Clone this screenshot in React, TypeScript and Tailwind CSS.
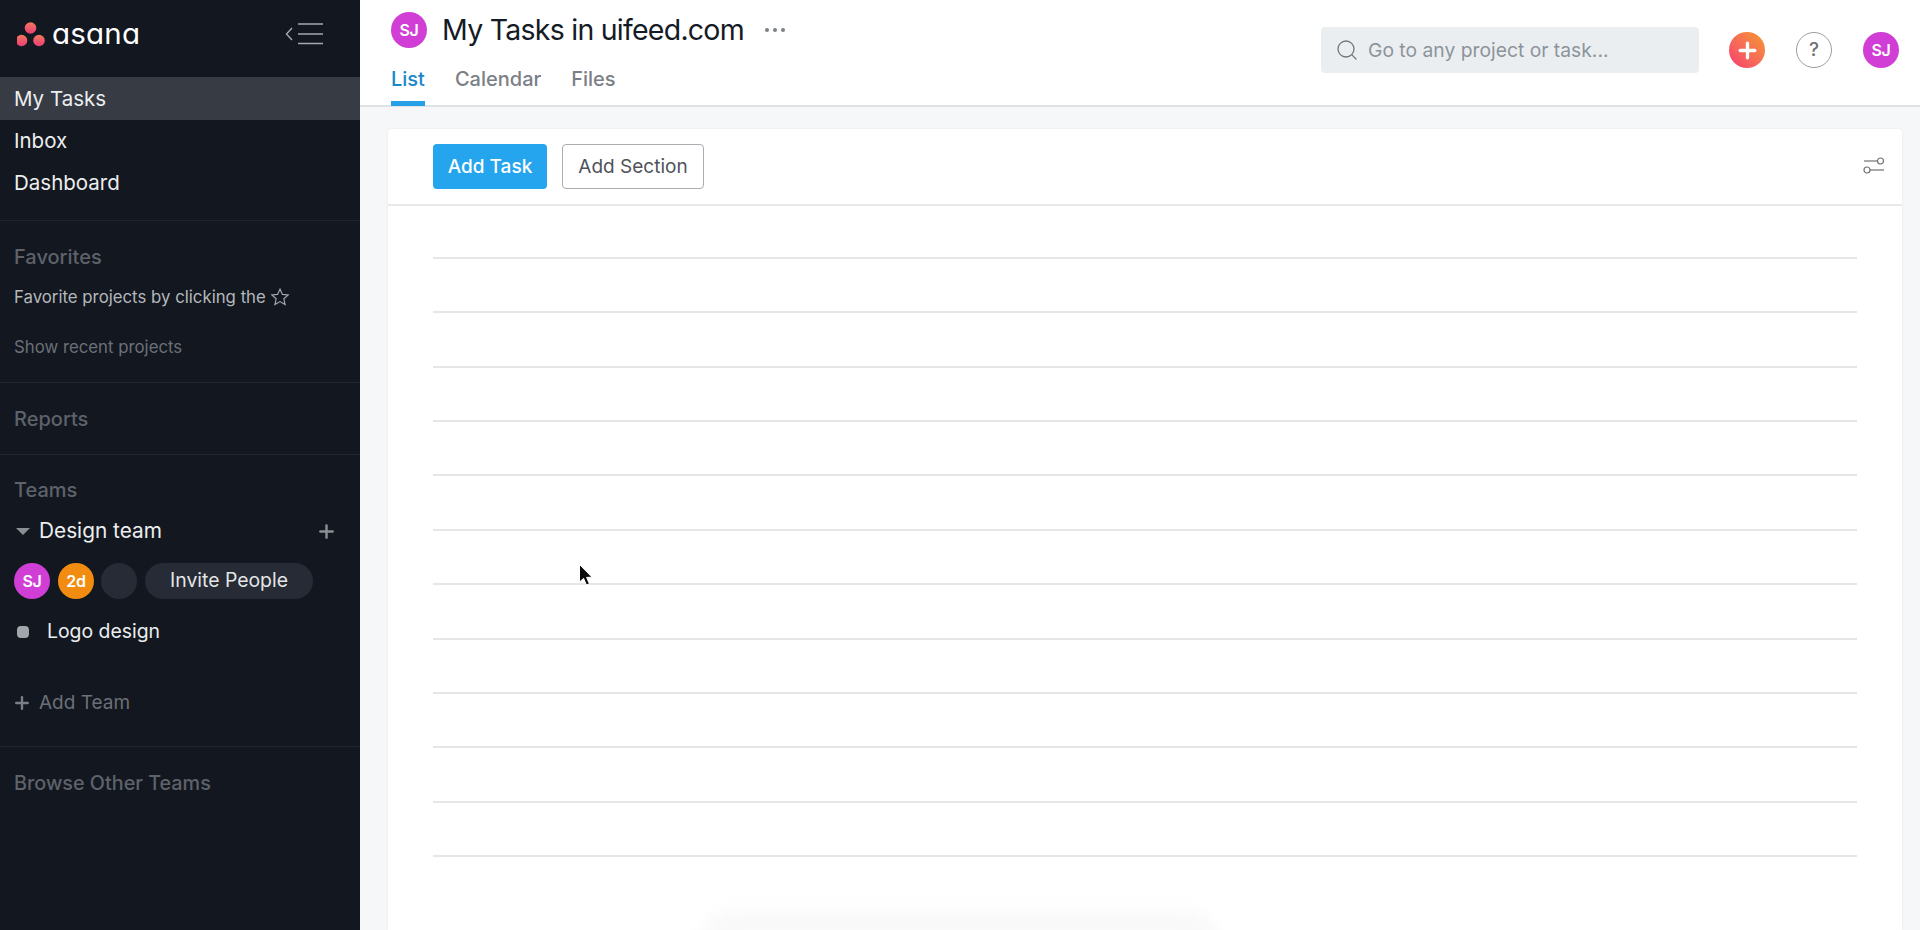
import { Plus, Search } from "lucide-react";

const FONT = "[font-family:Inter,'Liberation_Sans',sans-serif]";

function Avatar({ label, className }: { label: string; className: string }) {
  return (
    <div
      className={`flex h-9 w-9 shrink-0 items-center justify-center rounded-full text-[16px] font-semibold tracking-[-0.3px] text-white ${className}`}
    >
      {label}
    </div>
  );
}

function Divider({ className = "" }: { className?: string }) {
  return <div className={`h-px bg-[#1f242d] ${className}`} />;
}

function AsanaLogo() {
  return (
    <div className="flex items-center">
      <svg width="32" height="28" viewBox="0 0 32 28" className="shrink-0">
        <defs>
          <linearGradient id="asanaDot" x1="0" y1="0" x2="0" y2="1">
            <stop offset="0" stopColor="#f2795c" />
            <stop offset="1" stopColor="#ea3d77" />
          </linearGradient>
        </defs>
        <circle cx="13.5" cy="8" r="5.8" fill="url(#asanaDot)" />
        <circle cx="4.5" cy="20.5" r="5.8" fill="url(#asanaDot)" />
        <circle cx="22" cy="20.5" r="5.8" fill="url(#asanaDot)" />
      </svg>
      <span className="ml-[3px] text-[29.5px] font-normal leading-none tracking-[0.2px] text-white [font-feature-settings:'cv11']">
        asana
      </span>
    </div>
  );
}

function Sidebar() {
  return (
    <aside className="flex h-full w-[360px] shrink-0 flex-col bg-[#13171f] text-[#eceef0]">
      <div className="flex h-[77px] items-start justify-between pl-[17px] pr-[37px] pt-[19px]">
        <AsanaLogo />
        <svg width="38" height="22" viewBox="0 0 38 22" className="mt-[4px]" fill="none" stroke="#a5a8ad" strokeWidth="1.4">
          <path d="M7 5 L1.5 11 L7 17" />
          <path d="M13 1 H38 M13 11 H38 M13 20.5 H38" />
        </svg>
      </div>

      <div className="flex h-[43px] items-center bg-[#373b44] pl-[14px] pt-px text-[20.5px]">My Tasks</div>
      <div className="flex h-[42px] items-center pl-[14px] text-[20.5px]">Inbox</div>
      <div className="flex h-[42px] items-center pl-[14px] text-[20.5px]">Dashboard</div>

      <Divider className="mt-[16px]" />
      <div className="mt-[25px] pl-[14px] text-[20px] font-medium leading-[22px] text-[#5d626b]">Favorites</div>
      <div className="mt-[18px] flex items-center pl-[14px] text-[16.8px] leading-[22px] text-[#b4b7bc]">
        Favorite projects by clicking the
        <svg width="20" height="20" viewBox="0 0 24 24" fill="none" stroke="#a5a8ad" strokeWidth="1.4" className="ml-[4px]">
          <path d="M12 2.5 L14.9 8.9 L21.8 9.6 L16.6 14.2 L18.1 21 L12 17.5 L5.9 21 L7.4 14.2 L2.2 9.6 L9.1 8.9 Z" />
        </svg>
      </div>
      <div className="mt-[28px] pl-[14px] text-[16.8px] leading-[22px] text-[#6b7078]">Show recent projects</div>

      <Divider className="mt-[24px]" />
      <div className="mt-[25px] pl-[14px] text-[20px] font-medium leading-[22px] text-[#5d626b]">Reports</div>
      <Divider className="mt-[24px]" />
      <div className="mt-[24px] pl-[14px] text-[20px] font-medium leading-[22px] text-[#5d626b]">Teams</div>

      <div className="mt-[17px] flex h-[26px] items-center pl-[16px] pr-[23px]">
        <div className="h-0 w-0 border-x-[7px] border-t-[7px] border-x-transparent border-t-[#8b8e93]" />
        <span className="ml-[9px] flex-1 text-[20.8px]">Design team</span>
        <Plus size={21} color="#8b8e93" strokeWidth={2.8} />
      </div>

      <div className="mt-[19px] flex items-center pl-[14px]">
        <Avatar label="SJ" className="bg-[#d13ed6]" />
        <Avatar label="2d" className="ml-[8px] bg-[#f28c10]" />
        <div className="ml-[7px] h-9 w-9 rounded-full bg-[#262b35]" />
        <div className="ml-[8px] flex h-9 w-[168px] items-center justify-center rounded-full bg-[#262b35] text-[19.4px] text-[#e4e5e7]">
          Invite People
        </div>
      </div>

      <div className="mt-[20px] flex h-[26px] items-center pl-[17px]">
        <div className="h-[12px] w-[12px] rounded-[4px] bg-[#a2a5aa]" />
        <span className="ml-[18px] text-[19.4px]">Logo design</span>
      </div>

      <div className="mt-[45px] flex h-[26px] items-center pl-[12px] text-[19px] text-[#6b7078]">
        <Plus size={20} color="#7b7f86" strokeWidth={2.8} />
        <span className="ml-[7px]">Add Team</span>
      </div>

      <Divider className="mt-[30px]" />
      <div className="mt-[24px] pl-[14px] text-[19.8px] font-medium leading-[24px] text-[#5d626b]">Browse Other Teams</div>
    </aside>
  );
}

function Header() {
  return (
    <header className="flex h-[107px] shrink-0 justify-between border-b-2 border-[#dfe1e3] bg-white pl-[31px] pr-[21px]">
      <div>
        <div className="flex h-[60px] items-center">
          <Avatar label="SJ" className="bg-[#d13ed6]" />
          <h1 className="ml-[15px] text-[28.5px] font-normal tracking-[-0.75px] text-[#151b26]">My Tasks in uifeed.com</h1>
          <div className="ml-[21px] flex gap-[4px]">
            <span className="h-[4px] w-[4px] rounded-full bg-[#7d8187]" />
            <span className="h-[4px] w-[4px] rounded-full bg-[#7d8187]" />
            <span className="h-[4px] w-[4px] rounded-full bg-[#7d8187]" />
          </div>
        </div>
        <nav className="flex gap-[30px] text-[20px] font-medium leading-[38px] text-[#7b8086]">
          <span className="h-[46px] border-b-[5px] border-[#259fe6] text-[#1a87c9]">List</span>
          <span>Calendar</span>
          <span>Files</span>
        </nav>
      </div>

      <div className="flex items-start">
        <div className="mt-[27px] flex h-[46px] w-[378px] items-center rounded-[4px] bg-[#ebeef0] pl-[14px] text-[19.3px] text-[#8c949b]">
          <Search size={24} strokeWidth={1.3} color="#6f767c" />
          <span className="ml-[9px]">Go to any project or task...</span>
        </div>
        <div className="ml-[30px] mt-[32px] flex h-9 w-9 items-center justify-center rounded-full bg-gradient-to-tr from-[#f5366f] to-[#f5961f]">
          <Plus size={25} color="#fff" strokeWidth={3.2} />
        </div>
        <div className="ml-[31px] mt-[32px] flex h-9 w-9 items-center justify-center rounded-full border border-[#9a9da1] text-[19px] font-medium text-[#6d7176]">
          ?
        </div>
        <Avatar label="SJ" className="ml-[31px] mt-[32px] bg-[#d13ed6]" />
      </div>
    </header>
  );
}

function TaskCard() {
  const rows = Array.from({ length: 12 }, (_, i) => i);
  return (
    <div className="ml-[28px] mr-[18px] mt-[22px] flex-1 rounded-t-[4px] bg-white shadow-[0_0_3px_rgba(0,0,0,0.07)]">
      <div className="flex h-[77px] items-center border-b-2 border-[#e8eaeb] pl-[45px] pr-[17px]">
        <button className="h-[45px] w-[114px] rounded-[4px] bg-[#25a5ee] pt-[2px] text-[19px] font-medium text-white">Add Task</button>
        <button className="ml-[15px] h-[45px] w-[142px] rounded-[4px] border border-[#a9acb0] pt-[2px] text-[19px] text-[#4f5359]">Add Section</button>
        <svg width="22" height="18" viewBox="0 0 22 18" className="ml-auto -mt-[2px]" fill="none" stroke="#6d7176" strokeWidth="1.2">
          <circle cx="17.5" cy="4" r="3" />
          <path d="M1 4 H14.5" />
          <circle cx="4" cy="13" r="3" />
          <path d="M7 13 H21" />
        </svg>
      </div>
      <div className="mx-[45px] pt-[51px]">
        {rows.map((i) => (
          <div key={i} className="h-[54.36px] border-t-2 border-[#e5e6e7]" />
        ))}
      </div>
    </div>
  );
}

export default function App() {
  return (
    <div className={`relative flex h-[930px] w-[1920px] overflow-hidden ${FONT}`}>
      <Sidebar />
      <main className="flex min-w-0 flex-1 flex-col bg-[#f5f7f9]">
        <Header />
        <div className="flex min-h-0 flex-1 overflow-hidden">
          <TaskCard />
        </div>
      </main>

      {/* soft smudge at the bottom of the list */}
      <div className="absolute bottom-[-14px] left-[700px] h-[34px] w-[520px] rounded-t-[40px] bg-[#f9f9f9] blur-[8px]" />

      {/* mouse pointer */}
      <svg width="18" height="26" viewBox="0 0 18 26" className="absolute left-[578px] top-[563px]">
        <path d="M1.5 1.5 L1.5 19 L5.6 15.4 L8.4 22 L11.4 20.7 L8.6 14.4 L14 14.2 Z" fill="#0c0c0c" stroke="#fff" strokeWidth="1" />
      </svg>
    </div>
  );
}
